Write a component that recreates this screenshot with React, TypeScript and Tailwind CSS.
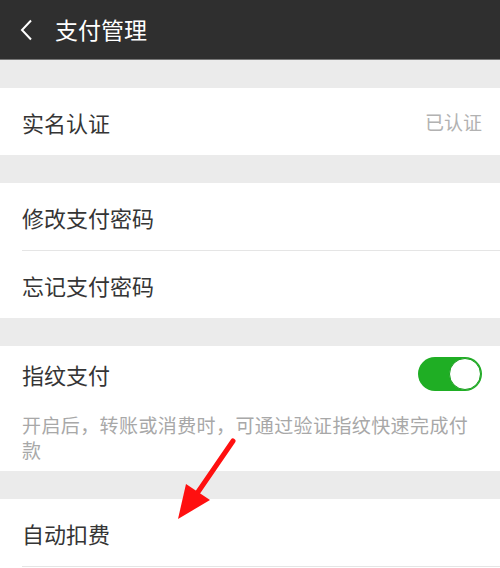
import React from "react";

const font = { fontFamily: '"Noto Sans CJK SC", "Noto Sans", sans-serif' };

function Gap() {
  return <div className="h-[28px] bg-[#ebebeb]" />;
}

function Row({ label, right, divider }: { label: string; right?: React.ReactNode; divider?: boolean }) {
  return (
    <div className="relative bg-white">
      <div className="flex h-[67px] items-center justify-between pl-[22px] pr-[18px]">
        <span className="text-[22px] leading-none text-[#353535]">{label}</span>
        {right}
      </div>
      {divider && <div className="ml-[22px] h-px bg-[#e5e5e5]" />}
    </div>
  );
}

export default function App() {
  return (
    <div className="relative h-[568px] w-[500px] overflow-hidden bg-[#ebebeb]" style={font}>
      <div className="flex h-[60px] items-center border-b border-[#777777] bg-[#2f2f2f]">
        <svg width="14" height="22" viewBox="0 0 14 22" className="ml-[19px]">
          <path d="M12 1.5 L3 11 L12 20.5" fill="none" stroke="#ffffff" strokeWidth="2" />
        </svg>
        <span className="ml-[22px] text-[23px] leading-none text-white">支付管理</span>
      </div>
      <Gap />
      <Row label="实名认证" right={<span className="text-[19px] leading-none text-[#b2b2b2]">已认证</span>} />
      <Gap />
      <Row label="修改支付密码" divider />
      <div className="bg-white">
        <div className="flex h-[67px] items-center pl-[22px]">
          <span className="text-[22px] leading-none text-[#353535]">忘记支付密码</span>
        </div>
      </div>
      <Gap />
      <div className="bg-white pb-[9px]">
        <div className="flex h-[56px] items-center justify-between pl-[22px] pr-[18px]">
          <span className="text-[22px] leading-none text-[#353535]">指纹支付</span>
          <div className="flex h-[34px] w-[64px] items-center justify-end rounded-full bg-[#1fae24] pr-[1px]">
            <div className="h-[32px] w-[32px] rounded-full border-[1.5px] border-[#1a9f1f] bg-white" />
          </div>
        </div>
        <p className="mt-[10px] pl-[22px] pr-[14px] text-[19px] leading-[25px] tracking-[0.4px] text-[#a8a8a8]">
          开启后，转账或消费时，可通过验证指纹快速完成付款
        </p>
      </div>
      <Gap />
      <Row label="自动扣费" divider />
      <div className="h-[2px] bg-white" />
      <svg className="pointer-events-none absolute left-0 top-0" width="500" height="568" viewBox="0 0 500 568">
        <line x1="233" y1="441" x2="198" y2="492" stroke="#ff1010" strokeWidth="5" strokeLinecap="round" />
        <polygon points="178,519 186,484 210,500" fill="#ff1010" />
      </svg>
    </div>
  );
}
